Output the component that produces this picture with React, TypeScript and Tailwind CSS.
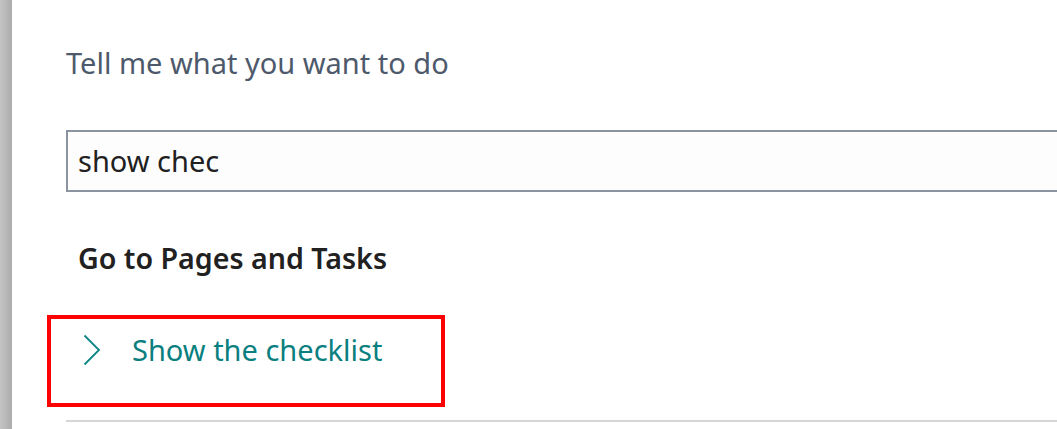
const ChevronRight = () => (
  <svg width="18" height="32" viewBox="0 0 18 32" fill="none" className="shrink-0">
    <path d="M1.5 1.5 L16 16 L1.5 30.5" stroke="#0a8588" strokeWidth="1.8" />
  </svg>
)

const App = () => {
  return (
    <div className="w-[1057px] h-[429px] overflow-hidden flex bg-white font-['Segoe_UI','Noto_Sans',sans-serif]">
      {/* shaded page edge */}
      <div className="w-[12px] shrink-0 bg-gradient-to-r from-[#c4c4c4] to-[#acacac]" />

      <div className="flex-1 flex flex-col pl-[54px] pt-[43px]">
        <h1 className="text-[29px] leading-[40px] text-[#4e5a6b]">Tell me what you want to do</h1>

        <div className="mt-[47px] h-[62px] shrink-0 border-2 border-r-0 border-[#8a939f] bg-[#fdfdfd] flex items-center pl-[10px]">
          <span className="text-[29px] text-[#212121]">show chec</span>
        </div>

        <h2 className="mt-[46px] pl-[12px] text-[28.6px] leading-[40px] font-semibold text-[#212121]">
          Go to Pages and Tasks
        </h2>

        <div className="-ml-[19px] mt-[37px] w-[398px] h-[92px] shrink-0 border-4 border-[#ff0000] flex items-start pt-[15px] pl-[32px] gap-[31px]">
          <ChevronRight />
          <span className="text-[29px] leading-[32px] text-[#0a7f80]">Show the checklist</span>
        </div>

        <div className="mt-[13px] h-[2px] shrink-0 bg-[#d6d6d6]" />
      </div>
    </div>
  )
}

export default App
